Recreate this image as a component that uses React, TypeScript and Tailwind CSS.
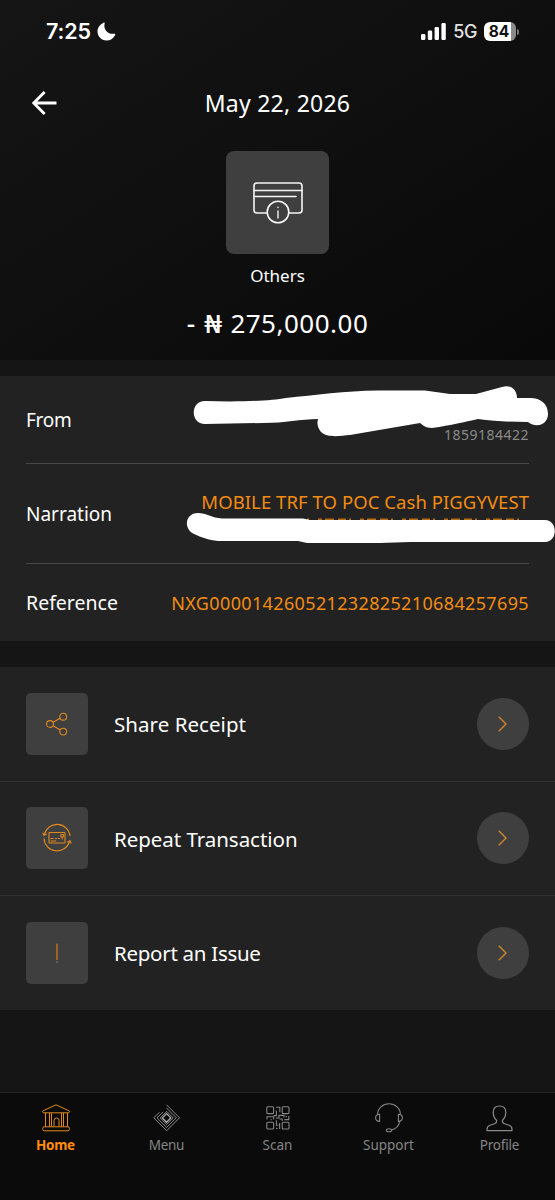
import React from 'react';

const CardInfoIcon: React.FC = () => (
  <svg width="50" height="42" viewBox="0 0 50 42" fill="none" stroke="#f5f5f5" strokeWidth="1.6" strokeLinecap="round">
    <path d="M14 31H4a3 3 0 0 1-3-3V4a3 3 0 0 1 3-3h42a3 3 0 0 1 3 3v24a3 3 0 0 1-3 3H36" />
    <path d="M1 8.5h48M1 14.5h42" />
    <circle cx="25" cy="30" r="10.8" />
    <path d="M25 29v7M25 25.3v.2" strokeWidth="1.4" />
  </svg>
);

const ShareIcon: React.FC = () => (
  <svg width="24" height="24" viewBox="0 0 24 24" fill="none" stroke="#e08a1e" strokeWidth="1.1">
    <circle cx="5" cy="12" r="3.4" />
    <circle cx="18.2" cy="4.7" r="3.4" />
    <circle cx="18.2" cy="19.6" r="3.4" />
    <path d="m8 10.3 7.2-4M8 13.7l7.2 4.2" />
  </svg>
);

const RepeatIcon: React.FC = () => (
  <svg width="30" height="30" viewBox="0 0 30 30" fill="none" stroke="#e08a1e" strokeWidth="1.1">
    <path d="M2.3 12A13 13 0 0 1 28 13M27.6 18A13 13 0 0 1 2 15.5" />
    <path d="m.8 9.6 1.2 2.8 2.6-1.6M29.2 20.6l-1.2-3-2.8 1.8" />
    <rect x="7" y="9.5" width="16" height="10.5" rx="0.8" />
    <path d="M8.6 15.5h3M13 15.5h2M16 15.5h2M8.6 18h5.5" strokeWidth="1" />
    <path d="M18.8 11.5h2.7v2.5h-2.7zM20.2 14v2.4" strokeWidth="1" />
  </svg>
);

const IssueIcon: React.FC = () => (
  <svg width="24" height="24" viewBox="0 0 24 24" fill="none">
    <path d="M12 2.5V19" stroke="#b87322" strokeWidth="1.5" />
    <path d="M12 20.5v1.2" stroke="#8f8f8f" strokeWidth="1.2" />
  </svg>
);

const HomeIcon: React.FC = () => (
  <svg width="28" height="28" viewBox="0 0 28 28" fill="none" stroke="#e08a1e" strokeWidth="1" strokeLinejoin="round">
    <path d="M14 .8 1 6.8c-.8.5-.4 2 .6 2h24.8c1 0 1.4-1.5.6-2z" />
    <path d="M3.5 9v13.6M7.5 9v13.6M9.5 9v13.6M19.5 9v13.6M21.5 9v13.6M25.5 9v13.6" />
    <path d="M12 22.5v-6a2.5 2.5 0 0 1 5 0v6" />
    <rect x="0.8" y="22.8" width="26.6" height="4" rx="1.4" />
  </svg>
);

const MenuIcon: React.FC = () => (
  <svg width="28" height="28" viewBox="0 0 28 28" fill="none" stroke="#8b8b8b" strokeWidth="1">
    <path d="m13.5.8 13 13L13.7 26.8.8 13.9l5.6-5.6" />
    <path d="m13.5 4 9.8 9.8-9.6 9.7L4 13.9l6-6" />
    <path d="m13.5 7.2 6.7 6.7-6.5 6.6-6.5-6.6 6.4-6.4" />
    <path d="m13.6 9.6 4.2 4.3-4.2 4.3-4.2-4.3z" strokeWidth="1.3" stroke="#b0b0b0" />
  </svg>
);

const ScanIcon: React.FC = () => (
  <svg width="24" height="24" viewBox="0 0 24 24" fill="none" stroke="#858585" strokeWidth="1.1">
    <rect x=".8" y=".8" width="6.8" height="6.8" rx="1" />
    <rect x="16.2" y=".8" width="6.8" height="6.8" rx="1" />
    <rect x=".8" y="16.2" width="6.8" height="6.8" rx="1" />
    <rect x="16.2" y="16.2" width="6.8" height="6.8" rx="1" />
    <path d="M10 1.2h3.8v5M10.4 4.4v5.2H7.6M1 13.4v-2.6h6.6v2.6M4.6 13.6h1M10 12h3V9.4h5v2.2M19.6 10.6h1.2M22.8 10v3.6h-4.4M13.6 13h2.6v2M10.4 14.2v5h2M13.6 17v6M10 22.4h1.6" />
  </svg>
);

const SupportIcon: React.FC = () => (
  <svg width="28" height="30" viewBox="0 0 28 30" fill="none" stroke="#858585" strokeWidth="1.1">
    <path d="M2.6 11.4a11.4 10.6 0 0 1 22.8 0" />
    <path d="M4.6 11.2c-2.6 0-4 1.4-4 3.6s1.4 3.6 4 3.6zM23.4 11.2c2.6 0 4 1.4 4 3.6s-1.4 3.6-4 3.6z" />
    <path d="M24.8 18.2c-.9 4.6-4 7.9-8.2 8.8" />
    <ellipse cx="14" cy="27.3" rx="2.7" ry="1.5" />
  </svg>
);

const ProfileIcon: React.FC = () => (
  <svg width="27" height="27" viewBox="0 0 27 27" fill="none" stroke="#8b8b8b" strokeWidth="1.2" strokeLinejoin="round">
    <path d="M10.5 15.2C8.2 13.2 7.2 10.4 7.2 7.3 7.2 3.3 9.8 1 13.5 1s6.3 2.3 6.3 6.3c0 3.1-1 5.9-3.3 7.9-.5 2.2.2 2.9 2 3.5l4.5 1.5c2 .7 3 1.9 3 4v1.4H1v-1.4c0-2.1 1-3.3 3-4l4.5-1.5c1.8-.6 2.5-1.3 2-3.5z" />
  </svg>
);

const actions = [
  { label: 'Share Receipt', icon: <ShareIcon />, style: 'mt-0.5 tracking-[0.05px]' },
  { label: 'Repeat Transaction', icon: <RepeatIcon />, style: 'mt-0.5 tracking-[-0.04px]' },
  { label: 'Report an Issue', icon: <IssueIcon />, style: 'tracking-[-0.28px]' },
];

const tabs = [
  { label: 'Home', icon: <HomeIcon />, style: 'font-bold text-[#ff8c0f] tracking-[-0.3px]' },
  { label: 'Menu', icon: <MenuIcon />, style: 'text-[#858585] tracking-[-0.3px]' },
  { label: 'Scan', icon: <ScanIcon />, style: 'text-[#858585]' },
  { label: 'Support', icon: <SupportIcon />, style: 'text-[#858585]' },
  { label: 'Profile', icon: <ProfileIcon />, style: 'text-[#858585] tracking-[-0.2px]' },
];

const StatusBar: React.FC = () => (
  <div className="flex h-16 items-center justify-between pl-[46px] pr-9 font-['Inter'] text-white">
    <div className="flex items-center gap-[6px] pb-px">
      <span className="text-[21.5px] font-semibold tracking-[-0.1px]">7:25</span>
      <svg width="19" height="19" viewBox="0 0 19 19" fill="white">
        <path d="M6.2.9C7.2.3 7.9.7 7.6 1.7 6.2 6.9 10.5 12.5 16.6 11.8c1.5-.2 2 .2 1.4 1.4C16.3 16.5 13.2 18.5 9.5 18.5 4.4 18.5.5 14.6.5 9.6.5 5.8 2.7 2.5 6.2.9z" />
      </svg>
    </div>
    <div className="flex items-center pb-px">
      <svg width="26" height="17" viewBox="0 0 26 17" fill="white">
        <rect x="0" y="11" width="4.4" height="6" rx="1.3" />
        <rect x="6.8" y="7.6" width="4.4" height="9.4" rx="1.3" />
        <rect x="13.6" y="4" width="4.4" height="13" rx="1.3" />
        <rect x="20.4" y="0" width="4.4" height="17" rx="1.3" />
      </svg>
      <span className="ml-1.5 text-[18px] font-medium tracking-[-0.4px] text-[#e2e2e2]">5G</span>
      <div className="ml-[7px] flex h-[19px] w-8 items-center justify-center rounded-md bg-linear-to-r from-white from-84% to-[#8a8a8a] to-84% pr-0.5 text-[15.5px] font-bold text-[#111111]">
        <span className="mt-px">84</span>
      </div>
      <div className="ml-px h-1.5 w-[2px] rounded-r-full bg-[#777777]" />
    </div>
  </div>
);

const App: React.FC = () => {
  return (
    <div className="flex h-[1200px] w-[555px] flex-col overflow-hidden bg-[#151515] font-['Noto_Sans',sans-serif] text-white">
      <header className="h-[360px] bg-linear-to-br from-[#151515] to-[#090909]">
        <StatusBar />
        <div className="grid h-[78px] grid-cols-[80px_1fr_80px] items-center">
          <button className="pl-8" aria-label="Back">
            <svg width="25" height="24" viewBox="0 0 25 24" fill="none" stroke="white" strokeWidth="2.8">
              <path d="M12.6 1 1.8 12l10.8 11M2 12h22.5" />
            </svg>
          </button>
          <h1 className="text-center text-[23px] tracking-[0.25px]">May 22, 2026</h1>
        </div>
        <div className="mt-[9px] flex flex-col items-center">
          <div className="flex h-[103px] w-[103px] items-center justify-center rounded-lg bg-[#3f3f3f]">
            <CardInfoIcon />
          </div>
          <p className="mt-2 text-[17px] leading-7">Others</p>
          <p className="mt-[15px] flex items-center text-[26px] leading-9 tracking-[0.5px]">
            <span className="font-medium">-</span>
            <span className="ml-[8px] mr-2 inline-block scale-x-125 px-[2px] text-[25px] font-medium">₦</span>
            275,000.00
          </p>
        </div>
      </header>

      <section className="relative mt-4 h-[265px] bg-[#222222] px-[26px]">
        <div className="flex h-[88px] items-center justify-between border-b border-[#484848]">
          <span className="mt-px text-[19px] tracking-[-0.3px]">From</span>
          <span className="mt-[30px] text-[14px] tracking-[0.5px] text-[#8a8a8a]">1859184422</span>
        </div>
        <div className="flex h-[100px] items-center justify-between border-b border-[#484848]">
          <span className="mt-0.5 text-[19px]">Narration</span>
          <span className="mb-6 text-[18.5px] tracking-[0.06px] text-[#f28c13]">MOBILE TRF TO POC Cash PIGGYVEST</span>
        </div>
        <div className="flex h-[77px] items-center justify-between">
          <span className="mt-px text-[19.5px]">Reference</span>
          <span className="mt-0.5 text-[18px] tracking-[0.36px] text-[#f28c13]">NXG000014260521232825210684257695</span>
        </div>
        <svg className="absolute left-0 top-0" width="555" height="265" viewBox="0 376 555 265" fill="white">
          <path d="M307 519.5H522" stroke="#b96d14" strokeWidth="2" strokeDasharray="2 9 4 3 9 4 8 3" />
          <path d="M205 401C240 402 270 401 286 398C315 395 345 391 378 390.5H425L450 394H476L502 387C511 384 517 390 517 398H530C541 398 548 404 548 414C548 424 537 429 528 422C510 422 495 421 478 419C464 422 452 425 432 428C425 428 423 425 420 423L350 435C340 436 327 438 321 432C317 427 317 423 318 419C300 419 286 423 263 423L205 424C190 424 190 401 205 401Z" />
          <path d="M198 513C206 513 212 518 222 518.5H303L310 520H545C558 520 558 542 545 542H410L380 543H307L298 541H218C209 540 200 537 194 534C183 529 185 513 198 513Z" />
        </svg>
      </section>

      <section className="mt-[26px] bg-[#222222]">
        {actions.map((a, i) => (
          <button
            key={a.label}
            className={`flex w-full items-center px-[26px] text-left ${i < 2 ? 'h-[114.5px] border-b border-[#303030]' : 'h-[114px]'}`}
          >
            <div className="flex h-[62px] w-[62px] items-center justify-center rounded-[5px] bg-[#3f3f3f]">{a.icon}</div>
            <span className={`ml-[26px] flex-1 text-[20.5px] ${a.style}`}>{a.label}</span>
            <div className="flex h-[52px] w-[52px] items-center justify-center rounded-full bg-[#3f3f3f] pr-0.5">
              <svg width="9" height="16" viewBox="0 0 9 16" fill="none" stroke="#cf842a" strokeWidth="1.4">
                <path d="m.8.8 7.2 7.2-7.2 7.2" />
              </svg>
            </div>
          </button>
        ))}
      </section>

      <nav className="mt-auto grid h-[108px] grid-cols-5 border-t border-[#222222] bg-[#0b0b0b]">
        {tabs.map((t) => (
          <button key={t.label} className="flex flex-col items-center pt-[9px]">
            <span className="mt-px flex h-[30px] items-center">{t.icon}</span>
            <span className={`mt-0.5 text-[13.5px] leading-5 ${t.style}`}>{t.label}</span>
          </button>
        ))}
      </nav>
    </div>
  );
};

export default App;
